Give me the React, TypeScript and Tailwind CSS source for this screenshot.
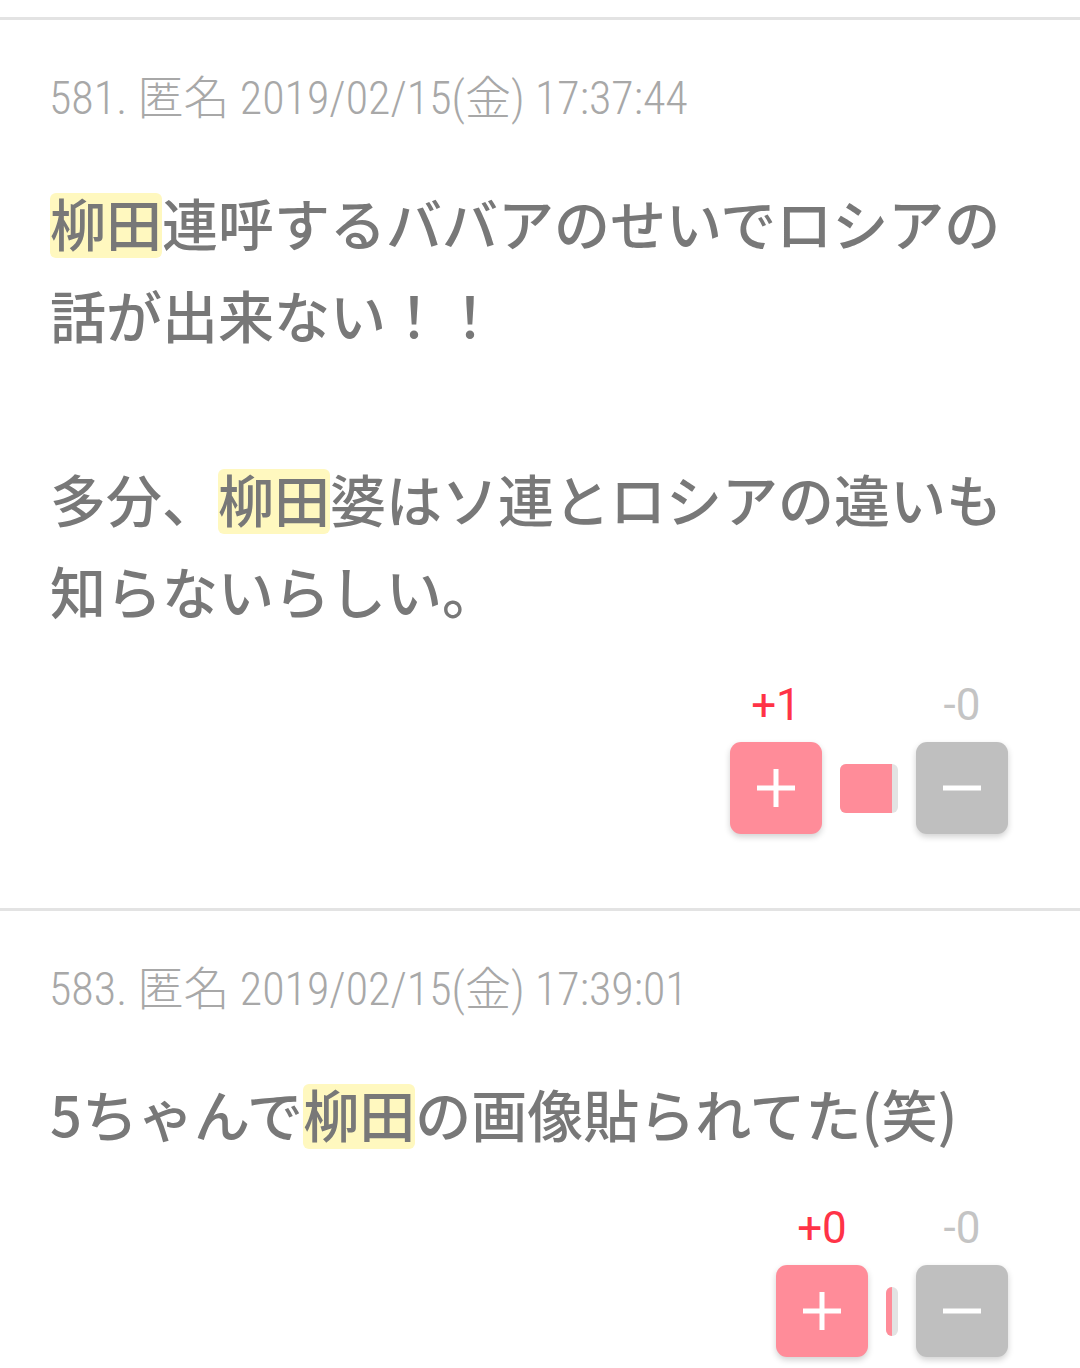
import type { ReactNode } from 'react';

interface Comment {
  no: number;
  date: string;
  body: ReactNode;
  plus: number;
  minus: number;
  barWidth: number;
  barFill: number;
}

function Mark({ children }: { children: ReactNode }) {
  return (
    <span className="inline-block rounded-[6px] bg-[#fff8bf] pb-[8px] leading-[57px]">{children}</span>
  );
}

const comments: Comment[] = [
  {
    no: 581,
    date: '2019/02/15(金) 17:37:44',
    body: (
      <>
        <Mark>柳田</Mark>連呼するババアのせいでロシアの話が出来ない！！
        <br />
        <br />
        多分、<Mark>柳田</Mark>婆はソ連とロシアの違いも知らないらしい。
      </>
    ),
    plus: 1,
    minus: 0,
    barWidth: 58,
    barFill: 52,
  },
  {
    no: 583,
    date: '2019/02/15(金) 17:39:01',
    body: (
      <>
        5ちゃんで<Mark>柳田</Mark>の画像貼られてた(笑)
      </>
    ),
    plus: 0,
    minus: 0,
    barWidth: 12,
    barFill: 6,
  },
];

function PlusIcon() {
  return (
    <svg width="38" height="38" viewBox="0 0 38 38">
      <rect x="16.5" y="0" width="5" height="38" fill="white" />
      <rect x="0" y="16.5" width="38" height="5" fill="white" />
    </svg>
  );
}

function MinusIcon() {
  return (
    <svg width="38" height="6" viewBox="0 0 38 6">
      <rect x="0" y="0.5" width="38" height="5" fill="white" />
    </svg>
  );
}

function Votes({ c }: { c: Comment }) {
  return (
    <div className="flex items-end justify-end pr-[72px]">
      <div className="flex flex-col items-center">
        <span className="h-[50px] text-[44px] leading-[50px] text-[#ff3347] [font-family:Roboto,'Noto_Sans',sans-serif]">
          +{c.plus}
        </span>
        <button className="mt-[12px] flex h-[92px] w-[92px] items-center justify-center rounded-[11px] bg-[#ff8c99] shadow-[0_3px_6px_rgba(0,0,0,0.18)]">
          <PlusIcon />
        </button>
      </div>
      <div className="mx-[18px] flex h-[92px] items-center">
        <div
          className="flex h-[49px] overflow-hidden rounded-[6px] bg-[#e3e3e3]"
          style={{ width: c.barWidth }}
        >
          <div className="h-full bg-[#ff8c99]" style={{ width: c.barFill }} />
        </div>
      </div>
      <div className="flex flex-col items-center">
        <span className="h-[50px] text-[44px] leading-[50px] text-[#c4c4c4] [font-family:Roboto,'Noto_Sans',sans-serif]">
          -{c.minus}
        </span>
        <button className="mt-[12px] flex h-[92px] w-[92px] items-center justify-center rounded-[11px] bg-[#bfbfbf] shadow-[0_3px_6px_rgba(0,0,0,0.18)]">
          <MinusIcon />
        </button>
      </div>
    </div>
  );
}

export default function App() {
  return (
    <div className="min-h-[1368px] bg-white [font-family:'Noto_Sans_CJK_JP',sans-serif]">
      <div className="h-[17px]" />
      {comments.map((c) => (
        <div key={c.no} className="border-t-[3px] border-[#e3e3e3] pt-[48px] pb-[74px]">
          <div className="pl-[49px] pr-[50px] text-[46px] leading-[60px] font-light text-[#a8a8a8] [font-family:'Roboto_Condensed','Noto_Sans_CJK_JP',sans-serif]">
            {c.no}. 匿名 {c.date}
          </div>
          <div className="mt-[48px] px-[50px] text-[56px] leading-[92px] font-medium text-[#787878]">
            {c.body}
          </div>
          <div className="mt-[44px]">
            <Votes c={c} />
          </div>
        </div>
      ))}
    </div>
  );
}
